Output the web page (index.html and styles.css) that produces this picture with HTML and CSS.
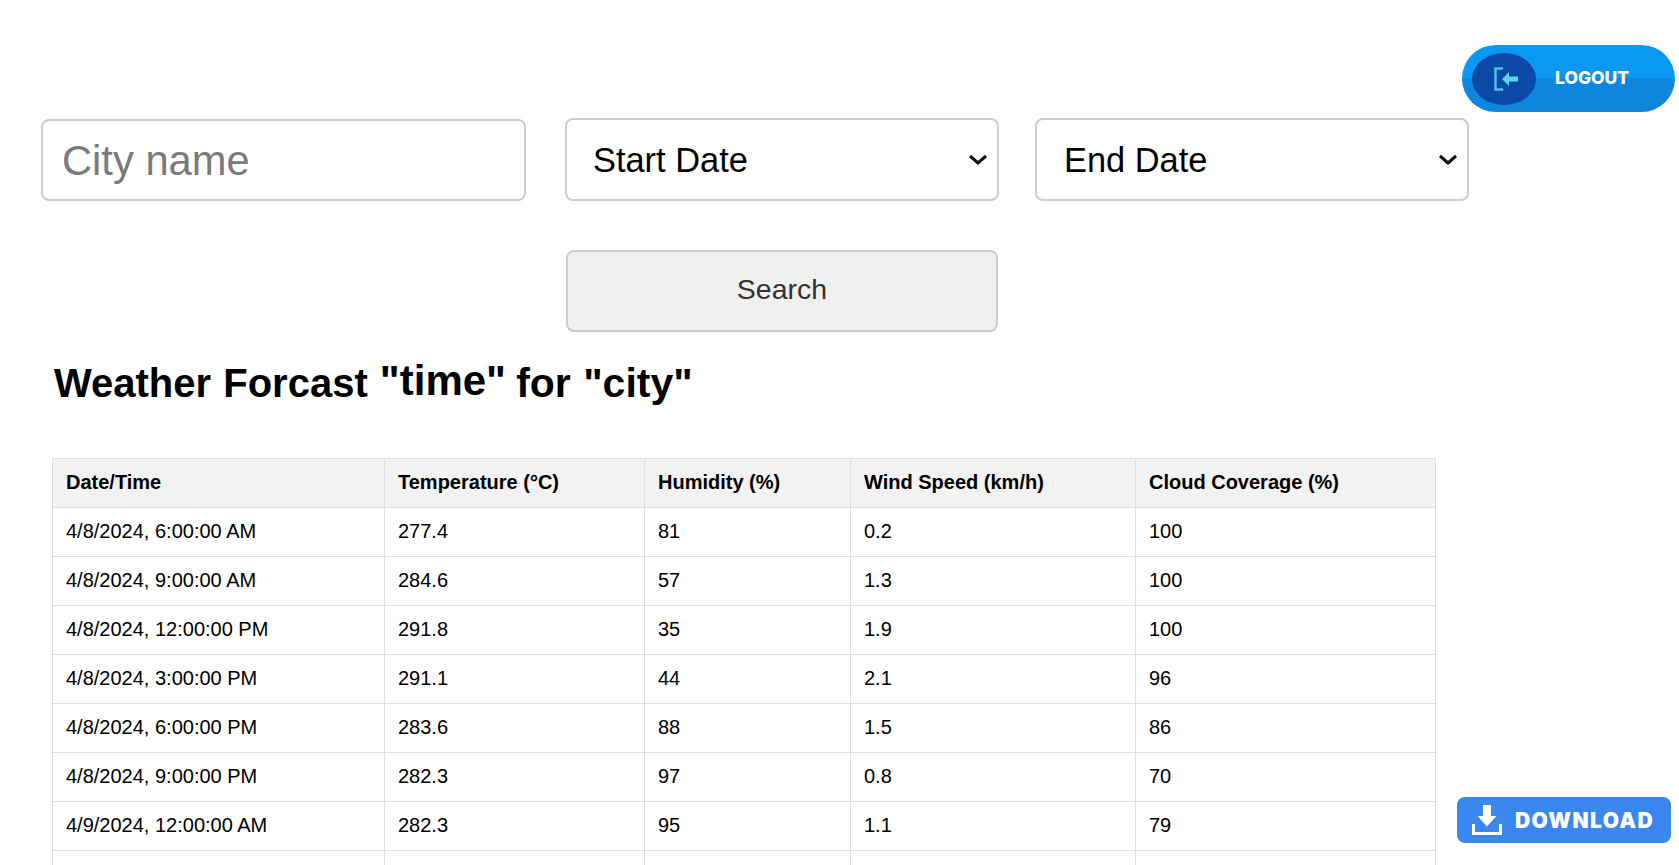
FILE: index.html
```html
<!DOCTYPE html>
<html lang="en">
<head>
<meta charset="utf-8">
<title>Weather Forecast</title>
<link rel="stylesheet" href="styles.css">
</head>
<body>
<a class="logout" href="#">
  <span class="logout-disc">
    <svg width="26" height="24" viewBox="0 0 26 24" aria-hidden="true">
      <path d="M10 1.500H2.500V22.500H10" fill="none" stroke="#4fbfee" stroke-width="2.500"/>
      <path d="M9 12L16 5V9.500H25V14.500H16V19Z" fill="#5cd2f6"/>
    </svg>
  </span>
  <span class="logout-label">LOGOUT</span>
</a>
<main class="page">
  <form class="filters">
    <input class="city" type="text" placeholder="City name">
    <select class="date date-start"><option>Start Date</option></select>
    <select class="date date-end"><option>End Date</option></select>
    <button class="search" type="button">Search</button>
  </form>
  <h1 class="title">Weather Forcast <span class="title-raised">"time"</span> <span class="title-rest">for "city"</span></h1>
  <table class="forecast">
    <thead>
      <tr>
        <th class="c-date">Date/Time</th>
        <th class="c-temp">Temperature (°C)</th>
        <th class="c-hum">Humidity (%)</th>
        <th class="c-wind">Wind Speed (km/h)</th>
        <th class="c-cloud">Cloud Coverage (%)</th>
      </tr>
    </thead>
    <tbody>
      <tr><td>4/8/2024, 6:00:00 AM</td><td>277.4</td><td>81</td><td>0.2</td><td>100</td></tr>
      <tr><td>4/8/2024, 9:00:00 AM</td><td>284.6</td><td>57</td><td>1.3</td><td>100</td></tr>
      <tr><td>4/8/2024, 12:00:00 PM</td><td>291.8</td><td>35</td><td>1.9</td><td>100</td></tr>
      <tr><td>4/8/2024, 3:00:00 PM</td><td>291.1</td><td>44</td><td>2.1</td><td>96</td></tr>
      <tr><td>4/8/2024, 6:00:00 PM</td><td>283.6</td><td>88</td><td>1.5</td><td>86</td></tr>
      <tr><td>4/8/2024, 9:00:00 PM</td><td>282.3</td><td>97</td><td>0.8</td><td>70</td></tr>
      <tr><td>4/9/2024, 12:00:00 AM</td><td>282.3</td><td>95</td><td>1.1</td><td>79</td></tr>
      <tr><td>&nbsp;</td><td></td><td></td><td></td><td></td></tr>
    </tbody>
  </table>
</main>
<a class="download" href="#">
  <svg width="30" height="30" viewBox="0 0 30 30" aria-hidden="true">
    <path d="M11 0H19V11H24.500L15 21.500L5.500 11H11Z" fill="#fff"/>
    <path d="M1.500 19V28.500H28.500V19" fill="none" stroke="#fff" stroke-width="3"/>
  </svg>
  <span class="download-label">DOWNLOAD</span>
</a>
</body>
</html>
```

FILE: styles.css
```css
html {
  height: 100%;
  overflow: hidden;
}

body {
  margin: 0;
  height: 100%;
  overflow: hidden;
  background: #fff;
  color: #000;
  font-family: "Liberation Sans", Arial, sans-serif;
}

.page {
  padding: 118px 0 0 41px;
}

.filters {
  display: grid;
  grid-template-columns: 485px 434px 434px;
  grid-template-rows: 83px 82px;
  row-gap: 49px;
  column-gap: 39px;
  align-items: center;
}

.city {
  box-sizing: border-box;
  width: 100%;
  height: 82px;
  align-self: end;
  padding: 2px 19px 0;
  border: 2px solid #ccc;
  border-radius: 8px;
  font: 41.700px "Liberation Sans", Arial, sans-serif;
  color: #000;
  background: #fff;
  outline: none;
}

.city::placeholder {
  color: #7a7a7a;
}

.date {
  box-sizing: border-box;
  width: 100%;
  height: 83px;
  padding: 0 40px 0 26px;
  border: 2px solid #ccc;
  border-radius: 8px;
  font: 34.400px "Liberation Sans", Arial, sans-serif;
  color: #000;
  appearance: none;
  background: #fff url("data:image/svg+xml,%3Csvg xmlns='http://www.w3.org/2000/svg' width='20' height='11' viewBox='0 0 20 11'%3E%3Cpath d='M2 2L10 9L18 2' fill='none' stroke='%23111' stroke-width='3'/%3E%3C/svg%3E") no-repeat right 9px center;
}

.date-end {
  margin-left: -3px;
  padding-left: 27px;
}

.search {
  grid-column: 2;
  grid-row: 2;
  justify-self: start;
  box-sizing: border-box;
  width: 432px;
  height: 82px;
  margin-left: 1px;
  padding: 0 0 4px;
  border: 2px solid #ccc;
  border-radius: 8px;
  background: #f0f0f0;
  color: #333;
  font: 28.500px "Liberation Sans", Arial, sans-serif;
}

.title {
  margin: 24px 0 0 13px;
  font-size: 40px;
  line-height: 50px;
  font-weight: 700;
  word-spacing: 1px;
}

.title-raised {
  font-size: 42px;
  vertical-align: 2px;
}

.title-rest {
  margin-left: -2px;
  font-size: 41px;
}

.forecast {
  margin: 50px 0 0 11px;
  width: 1383px;
  table-layout: fixed;
  border-collapse: collapse;
  font-size: 20px;
}

.forecast th,
.forecast td {
  box-sizing: border-box;
  height: 49px;
  padding: 0 12px 2px 13px;
  border: 1px solid #ddd;
  text-align: left;
}

.forecast th {
  background: #f2f2f2;
  font-weight: 700;
}

.c-date { width: 332px; }
.c-temp { width: 260px; }
.c-hum { width: 206px; }
.c-wind { width: 285px; }
.c-cloud { width: 300px; }

.logout {
  position: absolute;
  top: 45px;
  left: 1462px;
  width: 213px;
  height: 67px;
  display: flex;
  align-items: center;
  border-radius: 34px;
  background: linear-gradient(#0a98f3 0, #0a98f3 50%, #0f86dd 50%, #0f86dd 100%);
  text-decoration: none;
}

.logout-disc {
  width: 64px;
  height: 52px;
  margin-left: 10px;
  padding-left: 3px;
  box-sizing: border-box;
  display: flex;
  align-items: center;
  justify-content: center;
  border-radius: 50%;
  background: #0a49a6;
}

.logout-label {
  margin: -2px 0 0 19px;
  color: #fff;
  font: 800 17.500px Inter, sans-serif;
}

.download {
  position: absolute;
  top: 797px;
  left: 1457px;
  width: 214px;
  height: 46px;
  box-sizing: border-box;
  padding-left: 15px;
  display: flex;
  align-items: center;
  gap: 13px;
  border-radius: 8px;
  background: #3b87f0;
  text-decoration: none;
}

.download-label {
  color: #fff;
  font: 900 21px Inter, sans-serif;
  letter-spacing: 1.400px;
}
```
